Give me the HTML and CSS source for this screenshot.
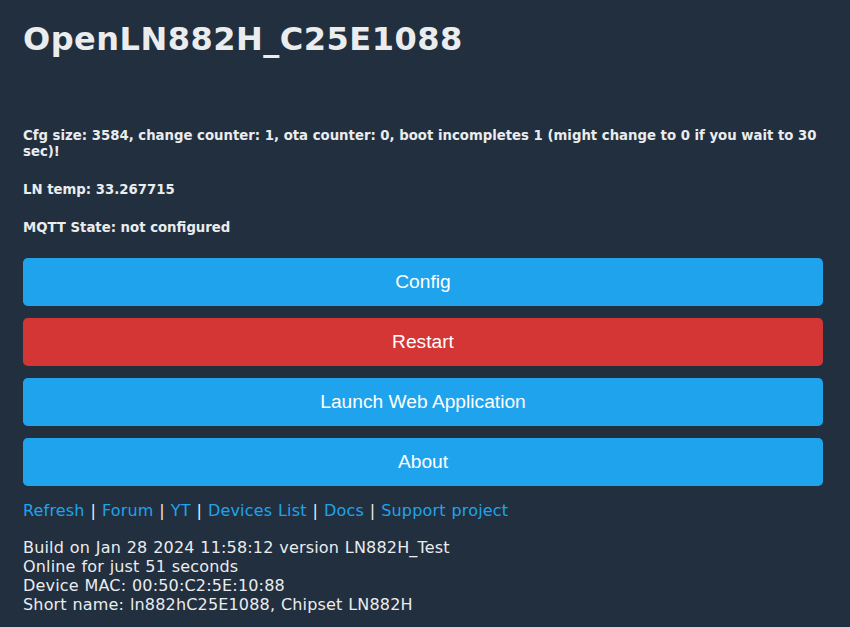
FILE: index.html
```html
<!DOCTYPE html>
<html lang="en">
<head>
    <meta charset="UTF-8">
    <meta name="viewport" content="width=device-width, initial-scale=1.0">
    <title>OpenLN882H_C25E1088</title>
    <link rel="stylesheet" href="styles.css">
</head>
<body>
    <!-- main page column -->
    <div class="page">
        <h1 class="title">OpenLN882H_C25E1088</h1>

        <!-- device state lines -->
        <h5 class="state">Cfg size: 3584, change counter: 1, ota counter: 0, boot incompletes 1 (might change to 0 if you wait to 30 sec)!</h5>
        <h5 class="state">LN temp: 33.267715</h5>
        <h5 class="state">MQTT State: not configured</h5>

        <!-- menu buttons -->
        <div class="menu">
            <button class="btn">Config</button>
            <button class="btn btn-red">Restart</button>
            <button class="btn">Launch Web Application</button>
            <button class="btn">About</button>
        </div>

        <div class="links">
            <a href="#">Refresh</a> | <a href="#">Forum</a> | <a href="#">YT</a> | <a href="#">Devices List</a> | <a href="#">Docs</a> | <a href="#">Support project</a>
        </div>

        <div class="build">
            Build on Jan 28 2024 11:58:12 version LN882H_Test<br>
            Online for just 51 seconds<br>
            Device MAC: 00:50:C2:5E:10:88<br>
            Short name: ln882hC25E1088, Chipset LN882H
        </div>
    </div>
</body>
</html>
```

FILE: styles.css
```css
* {
    margin: 0;
    padding: 0;
    box-sizing: border-box;
}

body {
    background-color: #222f3e;
    color: #eaecee;
    font-family: "DejaVu Sans", Verdana, sans-serif;
    font-size: 16px;
}

.page {
    padding: 20px 27px 0 23px;
}

.title {
    font-size: 32px;
    line-height: 38px;
    font-weight: bold;
    letter-spacing: 0.5px;
    margin-bottom: 70px;
}

.state {
    font-size: 13.28px;
    line-height: 16px;
    font-weight: bold;
    margin-bottom: 22px;
}

.menu {
    display: flex;
    flex-direction: column;
    gap: 12px;
}

.btn {
    border: 0;
    border-radius: 0.3rem;
    background-color: #1fa3ec;
    color: #fff;
    font-family: "Liberation Sans", Arial, sans-serif;
    font-size: 19.2px;
    height: 48px;
    width: 100%;
}

.btn-red {
    background-color: #d43535;
}

.links {
    margin-top: 15px;
    line-height: 19px;
    letter-spacing: 0.17px;
    word-spacing: 0.6px;
}

.links a {
    color: #1fa3ec;
    text-decoration: none;
}

.build {
    margin-top: 18px;
    line-height: 19px;
    letter-spacing: 0.17px;
    word-spacing: 0.5px;
}
```
